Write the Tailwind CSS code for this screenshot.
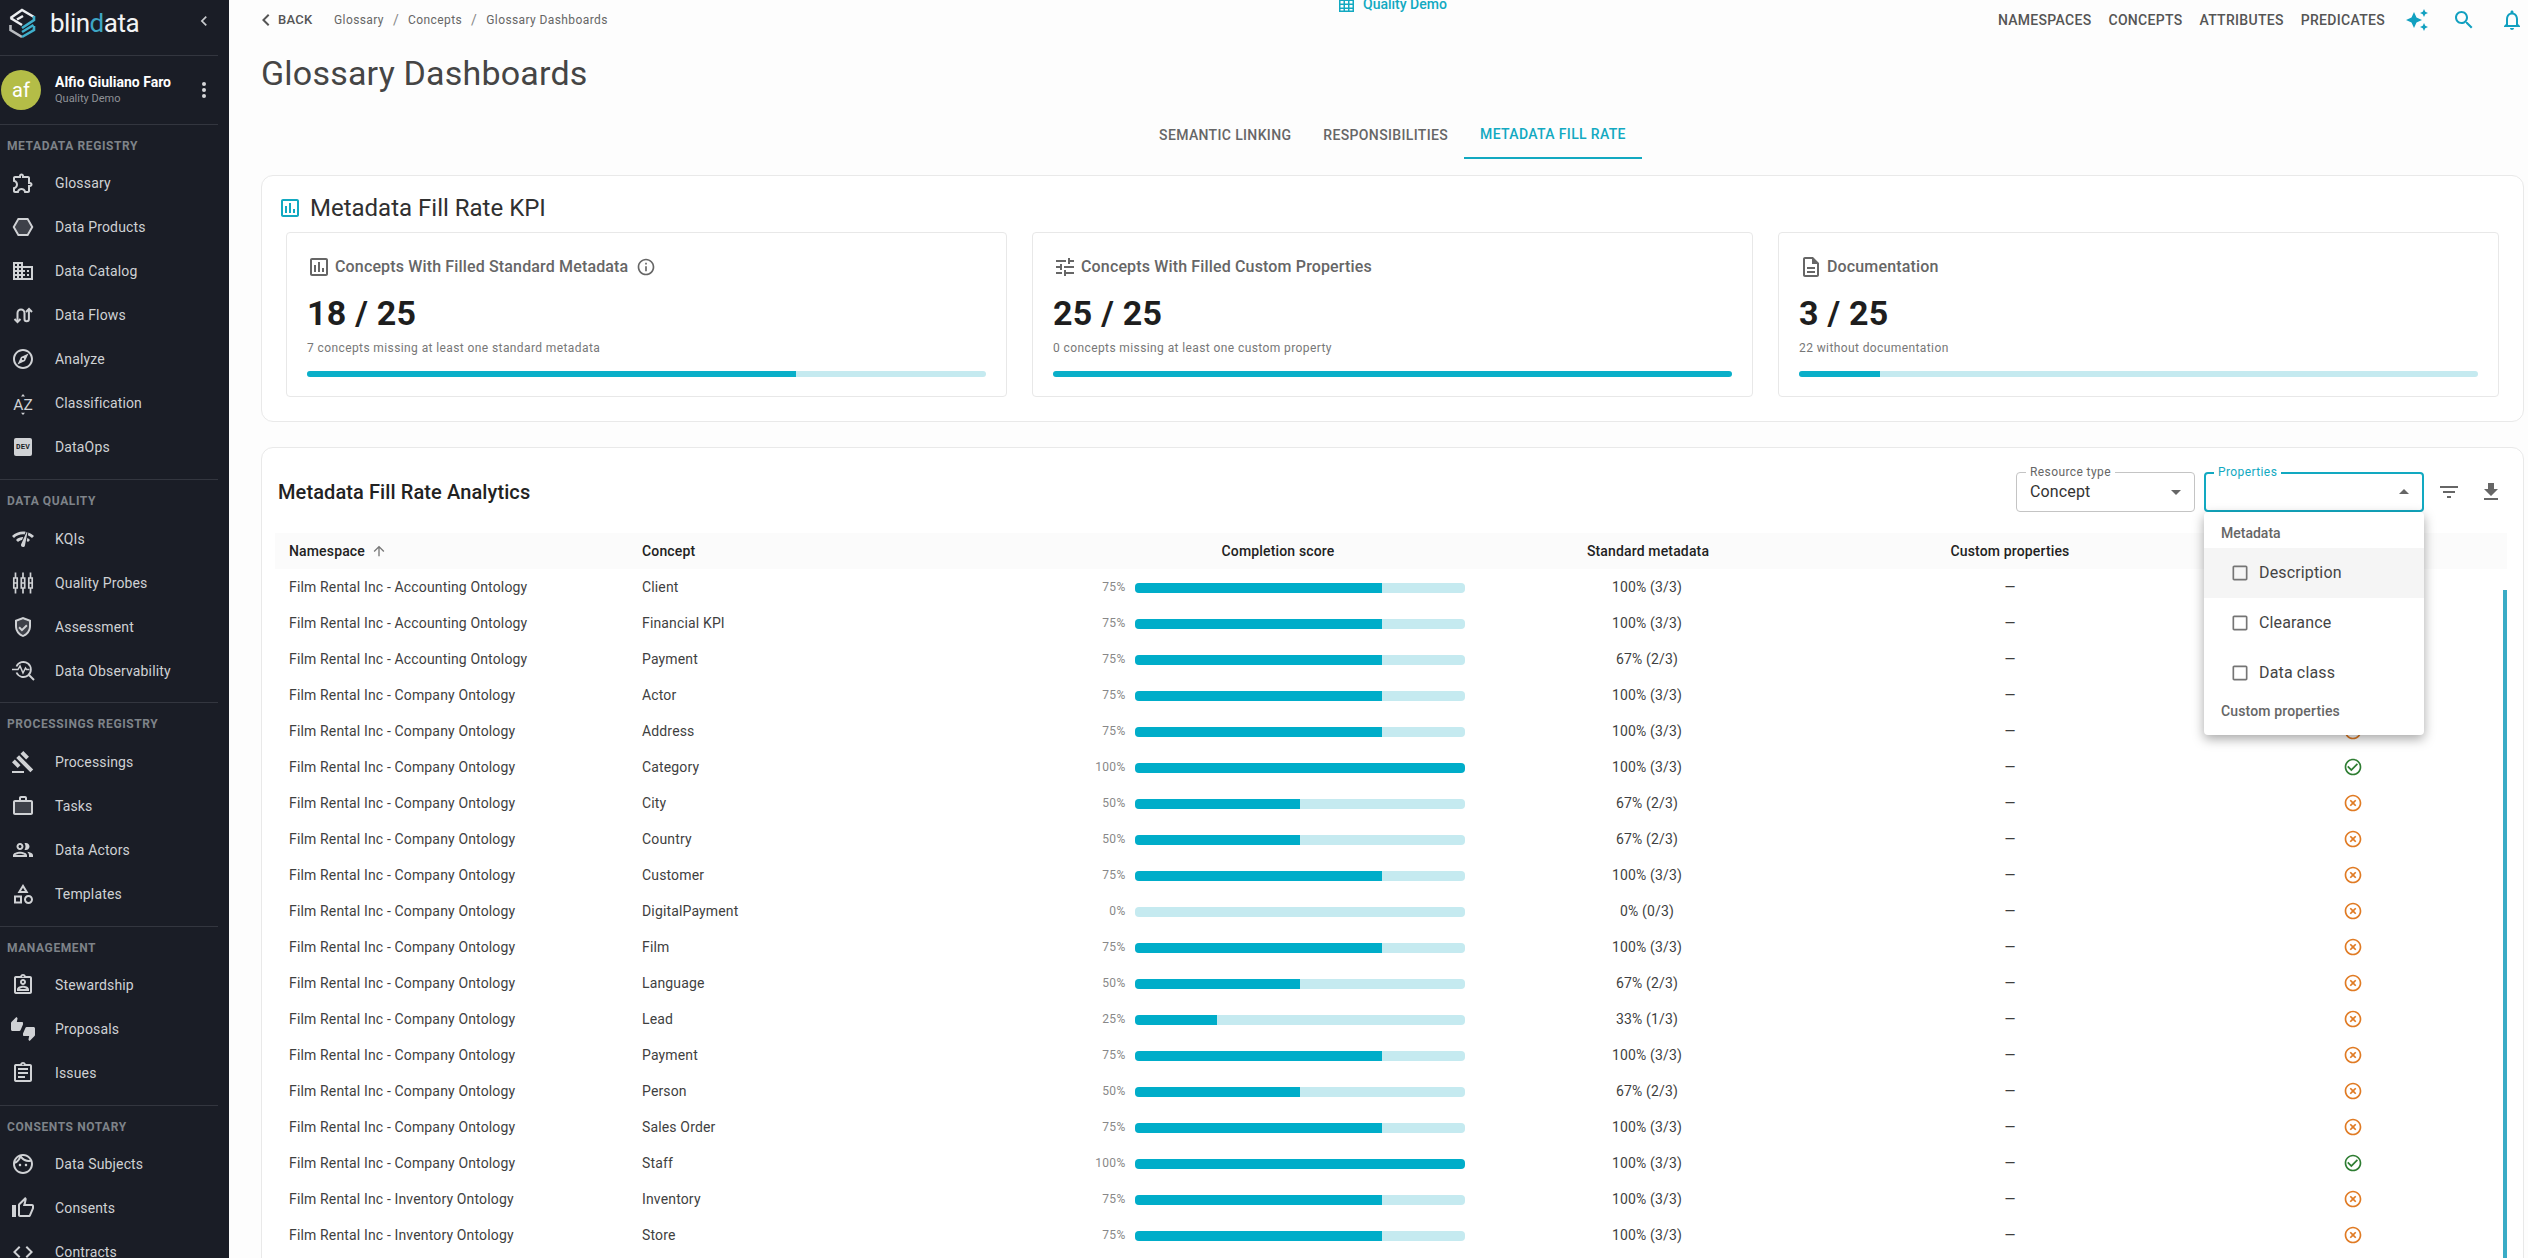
<!DOCTYPE html>
<html>
<head>
<meta charset="utf-8">
<title>Glossary Dashboards</title>
<script src="https://cdn.jsdelivr.net/npm/@tailwindcss/browser@4"></script>
</head>
<body>
<div class="flex h-screen w-screen overflow-hidden [font-family:Roboto,sans-serif] bg-[#fdfdfd]">
  <!-- Sidebar -->
  <aside class="w-[229px] shrink-0 h-screen overflow-hidden bg-[#1a1d26] text-[#cfd1d4]">
    <div class="h-[56px] pb-[10px] flex items-center relative mr-[11px] border-b border-[#33363f]">
      <svg class="w-[30px] h-[34px] ml-[8px] shrink-0" viewBox="8 5 30 34" fill="none" stroke-width="2.6" stroke-linejoin="miter">
        <path d="M10.5 17 L22 9 L34 16" stroke="#eceef0"/>
        <path d="M10.5 17 L22 24" stroke="#eceef0"/>
        <path d="M23 15 L17 18.5" stroke="#eceef0"/>
        <path d="M34 15 V19 L22 27" stroke="#3fb0cc"/>
        <path d="M33.5 24 L22 31" stroke="#3fb0cc"/>
        <path d="M10.5 24 V29 L22 36" stroke="#b9bcc0"/>
        <path d="M22 36 L34 29 V25" stroke="#3fb0cc"/>
      </svg>
      <span class="ml-[12px] text-[26px] leading-none tracking-[-.5px] text-[#f2f3f4] font-normal">blin<span class="text-[#3ea6c4]">d</span>ata</span>
      <svg class="absolute left-[194px] top-[11px] w-5 h-5" viewBox="0 0 24 24" fill="#c9cbce"><path d="M15.41 7.41 14 6l-6 6 6 6 1.41-1.41L10.83 12z"/></svg>
    </div>
    <div class="h-[67.75px] flex items-center">
      <div class="ml-[1px] w-10 h-10 rounded-full bg-[#b4bd47] text-white text-[20px] flex items-center justify-center">af</div>
      <div class="ml-[14px] flex flex-col w-[133px]">
        <span class="text-sm font-bold text-white leading-[18px]">Alfio Giuliano Faro</span>
        <span class="text-[11px] text-[#8f9297] leading-[16px]">Quality Demo</span>
      </div>
      <svg class="w-6 h-6 ml-[4px]" viewBox="0 0 24 24" fill="#d5d6d9"><circle cx="12" cy="6" r="2"/><circle cx="12" cy="12" r="2"/><circle cx="12" cy="18" r="2"/></svg>
    </div>

    <section class="mr-[11px] border-t border-[#33363f] pt-[11px] pb-[10px]">
      <h3 class="h-5 leading-5 pl-[7px] mb-[5.25px] text-xs font-bold tracking-[.6px] text-[#7e8389]">METADATA REGISTRY</h3>
      <a class="h-11 flex items-center pl-[11px] gap-5 text-sm tracking-[.15px]"><svg class="w-6 h-6 shrink-0" viewBox="0 0 24 24" fill="#d0d2d5"><path d="M10.5 4.5c.28 0 .5.22.5.5v2h6v6h2c.28 0 .5.22.5.5s-.22.5-.5.5h-2v6h-2.12c-.68-1.75-2.39-3-4.38-3s-3.7 1.25-4.38 3H4v-2.12c1.75-.68 3-2.39 3-4.38 0-1.99-1.24-3.7-2.99-4.38L4 7h6V5c0-.28.22-.5.5-.5m0-2C9.12 2.5 8 3.62 8 5H4c-1.1 0-1.99.9-1.99 2v3.8h.29c1.49 0 2.7 1.21 2.7 2.7s-1.21 2.7-2.7 2.7H2V20c0 1.1.9 2 2 2h3.8v-.3c0-1.49 1.21-2.7 2.7-2.7s2.7 1.21 2.7 2.7v.3H17c1.1 0 2-.9 2-2v-4c1.38 0 2.5-1.12 2.5-2.5S20.38 11 19 11V7c0-1.1-.9-2-2-2h-4c0-1.38-1.12-2.5-2.5-2.5z"/></svg>Glossary</a>
      <a class="h-11 flex items-center pl-[11px] gap-5 text-sm tracking-[.15px]"><svg class="w-6 h-6 shrink-0" viewBox="0 0 24 24" fill="#d0d2d5"><path d="M17.2 3H6.8l-5.2 9 5.2 9h10.4l5.2-9-5.2-9zm-1.15 16h-8.1l-4.04-7 4.04-7h8.1l4.04 7-4.04 7z"/><path opacity=".2" d="M16.05 5h-8.1l-4.04 7 4.04 7h8.1l4.04-7z"/></svg>Data Products</a>
      <a class="h-11 flex items-center pl-[11px] gap-5 text-sm tracking-[.15px]"><svg class="w-6 h-6 shrink-0" viewBox="0 0 24 24" fill="#d0d2d5"><path d="M12 7V3H2v18h20V7H12zM6 19H4v-2h2v2zm0-4H4v-2h2v2zm0-4H4V9h2v2zm0-4H4V5h2v2zm4 12H8v-2h2v2zm0-4H8v-2h2v2zm0-4H8V9h2v2zm0-4H8V5h2v2zm10 12h-8v-2h2v-2h-2v-2h2v-2h-2V9h8v10zm-2-8h-2v2h2v-2zm0 4h-2v2h2v-2z"/></svg>Data Catalog</a>
      <a class="h-11 flex items-center pl-[11px] gap-5 text-sm tracking-[.15px]"><svg class="w-6 h-6 shrink-0" viewBox="0 0 24 24" fill="none" stroke="#d0d2d5" stroke-width="2"><path d="M6.5 19V10a3.5 3.5 0 0 1 7 0v6a2.2 2.2 0 0 0 4.4 0V6"/><path d="M3.5 16l3 3 3-3M15 9l3-3 3 3"/></svg>Data Flows</a>
      <a class="h-11 flex items-center pl-[11px] gap-5 text-sm tracking-[.15px]"><svg class="w-6 h-6 shrink-0" viewBox="0 0 24 24" fill="#d0d2d5"><path d="M12 2C6.48 2 2 6.48 2 12s4.48 10 10 10 10-4.48 10-10S17.52 2 12 2zm0 18c-4.41 0-8-3.59-8-8s3.59-8 8-8 8 3.59 8 8-3.59 8-8 8zm-5.5-2.5l7.51-3.49L17.5 6.5 9.99 9.99 6.5 17.5zm5.5-6.6c.61 0 1.1.49 1.1 1.1s-.49 1.1-1.1 1.1-1.1-.49-1.1-1.1.49-1.1 1.1-1.1z"/></svg>Analyze</a>
      <a class="h-11 flex items-center pl-[11px] gap-5 text-sm tracking-[.15px]"><svg class="w-6 h-6 shrink-0" viewBox="0 0 24 24" fill="#d0d2d5"><text x="12" y="19" text-anchor="middle" font-family="Roboto" font-size="15.5">AZ</text><path d="M12 3l2 2.5h-4zM12 24l-2-2.2h4z"/></svg>Classification</a>
      <a class="h-11 flex items-center pl-[11px] gap-5 text-sm tracking-[.15px]"><span class="w-6 h-6 shrink-0 flex items-center justify-center"><span class="w-[18px] h-[18px] rounded-[2px] bg-[#d0d2d5] text-[#1a1d26] text-[7.5px] font-bold leading-[18px] text-center [font-family:'Liberation_Mono',monospace]">DEV</span></span>DataOps</a>
    </section>

    <section class="mr-[11px] border-t border-[#33363f] pt-[11px] pb-[9.25px]">
      <h3 class="h-5 leading-5 pl-[7px] mb-[6px] text-xs font-bold tracking-[.6px] text-[#7e8389]">DATA QUALITY</h3>
      <a class="h-11 flex items-center pl-[11px] gap-5 text-sm tracking-[.15px]"><svg class="w-6 h-6 shrink-0" viewBox="0 0 24 24" fill="#d0d2d5"><path d="M15.9 5c-.17 0-.32.09-.41.23l-.07.15-5.18 11.65c-.16.29-.26.61-.26.96 0 1.11.9 2.01 2.01 2.01.96 0 1.77-.68 1.96-1.59l.01-.03L16.4 5.5c0-.28-.22-.5-.5-.5zM1 9l2 2c2.88-2.88 6.79-4.08 10.53-3.62l1.19-2.68C9.89 3.84 4.74 5.27 1 9zm20 2l2-2c-1.64-1.64-3.55-2.82-5.59-3.57l-.53 2.82c1.5.62 2.9 1.53 4.12 2.75zm-4 4l2-2c-.8-.8-1.7-1.42-2.66-1.89l-.55 2.92c.42.27.83.59 1.21.97zM5 13l2 2c1.13-1.13 2.56-1.79 4.03-2l1.28-2.88c-2.63-.08-5.3.87-7.31 2.88z"/></svg>KQIs</a>
      <a class="h-11 flex items-center pl-[11px] gap-5 text-sm tracking-[.15px]"><svg class="w-6 h-6 shrink-0" viewBox="0 0 24 24" fill="none" stroke="#d0d2d5" stroke-width="1.7"><path d="M4.5 1.5v21M12 1.5v21M19.5 1.5v21"/><path d="M2.8 7h3.4v10H2.8zM10.3 7h3.4v10h-3.4zM17.8 7h3.4v10h-3.4z" fill="#1a1d26"/><path d="M3 12h3M10.5 12h3M18 12h3"/></svg>Quality Probes</a>
      <a class="h-11 flex items-center pl-[11px] gap-5 text-sm tracking-[.15px]"><svg class="w-6 h-6 shrink-0" viewBox="0 0 24 24" fill="#d0d2d5"><path opacity=".2" d="M18 11.09c0 4-2.55 7.7-6 8.83-3.45-1.13-6-4.82-6-8.83v-4.7l6-2.25 6 2.25z"/><path d="M12 2 4 5v6.09c0 5.05 3.41 9.76 8 10.91 4.59-1.15 8-5.86 8-10.91V5l-8-3zm6 9.09c0 4-2.55 7.7-6 8.83-3.45-1.13-6-4.82-6-8.83v-4.7l6-2.25 6 2.25v4.7zm-9.18.5L7.4 13l3.54 3.54 5.66-5.66-1.41-1.41-4.25 4.25-2.12-2.13z"/></svg>Assessment</a>
      <a class="h-11 flex items-center pl-[11px] gap-5 text-sm tracking-[.15px]"><svg class="w-6 h-6 shrink-0" viewBox="0 0 24 24" fill="none" stroke="#d0d2d5" stroke-width="1.8"><path d="M5.5 7.5a7.5 7.5 0 1 1 0 6"/><path d="M1 10.5h6l2-3.5 3 7 2.5-5 1 1.5h3" stroke-width="1.5"/><path d="M18 16l5 5" stroke-width="2"/></svg>Data Observability</a>
    </section>

    <section class="mr-[11px] border-t border-[#33363f] pt-[11px] pb-[10px]">
      <h3 class="h-5 leading-5 pl-[7px] mb-[5.25px] text-xs font-bold tracking-[.6px] text-[#7e8389]">PROCESSINGS REGISTRY</h3>
      <a class="h-11 flex items-center pl-[11px] gap-5 text-sm tracking-[.15px]"><svg class="w-6 h-6 shrink-0" viewBox="0 0 24 24" fill="#d0d2d5"><path d="M1 21h12v2H1zM5.245 8.07l2.83-2.827 14.14 14.142-2.828 2.828zM12.317 1l5.657 5.656-2.83 2.83-5.654-5.66zM3.825 9.485l5.657 5.657-2.828 2.828-5.657-5.657z"/></svg>Processings</a>
      <a class="h-11 flex items-center pl-[11px] gap-5 text-sm tracking-[.15px]"><svg class="w-6 h-6 shrink-0" viewBox="0 0 24 24" fill="#d0d2d5"><path opacity=".2" d="M4 8h16v11H4z"/><path d="M14 6V4h-4v2h4zM4 8v11h16V8H4zm16-2c1.11 0 2 .89 2 2v11c0 1.11-.89 2-2 2H4c-1.11 0-2-.89-2-2l.01-11c0-1.11.88-2 1.99-2h4V4c0-1.11.89-2 2-2h4c1.11 0 2 .89 2 2v2h4z"/></svg>Tasks</a>
      <a class="h-11 flex items-center pl-[11px] gap-5 text-sm tracking-[.15px]"><svg class="w-6 h-6 shrink-0" viewBox="0 0 24 24" fill="#d0d2d5"><path d="M9 13.75c-2.34 0-7 1.17-7 3.5V19h14v-1.75c0-2.33-4.66-3.5-7-3.5zM4.34 17c.84-.58 2.87-1.25 4.66-1.25s3.82.67 4.66 1.25H4.34zM9 12c1.93 0 3.5-1.57 3.5-3.5S10.93 5 9 5 5.5 6.57 5.5 8.5 7.07 12 9 12zm0-5c.83 0 1.5.67 1.5 1.5S9.83 10 9 10s-1.5-.67-1.5-1.5S8.17 7 9 7zm7.04 6.81c1.16.84 1.96 1.96 1.96 3.44V19h4v-1.75c0-2.02-3.5-3.17-5.96-3.44zM15 12c1.93 0 3.5-1.57 3.5-3.5S16.93 5 15 5c-.54 0-1.04.13-1.5.35.63.89 1 1.98 1 3.15s-.37 2.26-1 3.15c.46.22.96.35 1.5.35z"/></svg>Data Actors</a>
      <a class="h-11 flex items-center pl-[11px] gap-5 text-sm tracking-[.15px]"><svg class="w-6 h-6 shrink-0" viewBox="0 0 24 24" fill="#d0d2d5"><path d="M12 2l-5.5 9h11L12 2zm0 3.84L13.93 9h-3.87L12 5.84zM17.5 13c-2.49 0-4.5 2.01-4.5 4.5s2.01 4.5 4.5 4.5 4.5-2.01 4.5-4.5-2.01-4.5-4.5-4.5zm0 7c-1.38 0-2.5-1.12-2.5-2.5s1.12-2.5 2.5-2.5 2.5 1.12 2.5 2.5-1.12 2.5-2.5 2.5zM3 21.5h8v-8H3v8zm2-6h4v4H5v-4z"/></svg>Templates</a>
    </section>

    <section class="mr-[11px] border-t border-[#33363f] pt-[11px] pb-[10px]">
      <h3 class="h-5 leading-5 pl-[7px] mb-[5.25px] text-xs font-bold tracking-[.6px] text-[#7e8389]">MANAGEMENT</h3>
      <a class="h-11 flex items-center pl-[11px] gap-5 text-sm tracking-[.15px]"><svg class="w-6 h-6 shrink-0" viewBox="0 0 24 24" fill="#d0d2d5"><path d="M19 3h-4.18C14.4 1.84 13.3 1 12 1s-2.4.84-2.82 2H5c-.14 0-.27.01-.4.04-.39.08-.74.28-1.01.55-.18.18-.33.4-.43.64-.1.23-.16.49-.16.77v14c0 .27.06.54.16.78s.25.45.43.64c.27.27.62.47 1.01.55.13.02.26.03.4.03h14c1.1 0 2-.9 2-2V5c0-1.1-.9-2-2-2zm-7-.25c.41 0 .75.34.75.75s-.34.75-.75.75-.75-.34-.75-.75.34-.75.75-.75zM19 19H5V5h14v14zm-7-7c1.65 0 3-1.35 3-3s-1.35-3-3-3-3 1.35-3 3 1.35 3 3 3zm0-4c.55 0 1 .45 1 1s-.45 1-1 1-1-.45-1-1 .45-1 1-1zm6 8.43c0-2.5-3.97-3.58-6-3.58s-6 1.08-6 3.58V18h12v-1.57zM8.48 16c.74-.51 2.23-1.15 3.52-1.15s2.78.64 3.52 1.15H8.48z"/></svg>Stewardship</a>
      <a class="h-11 flex items-center pl-[11px] gap-5 text-sm tracking-[.15px]"><svg class="w-6 h-6 shrink-0" viewBox="0 0 24 24" fill="#d0d2d5"><path d="M12 6c0-.55-.45-1-1-1H5.82l.66-3.18.02-.23c0-.31-.13-.59-.33-.8L5.38 0 .44 4.94C.17 5.21 0 5.59 0 6v6.5c0 .83.67 1.5 1.5 1.5h6.75c.62 0 1.15-.38 1.38-.91l2.26-5.29c.07-.17.11-.36.11-.55V6zm10.5 4h-6.75c-.62 0-1.15.38-1.38.91l-2.26 5.29c-.07.17-.11.36-.11.55V18c0 .55.45 1 1 1h5.18l-.66 3.18-.02.24c0 .31.13.59.33.8l.79.78 4.94-4.94c.27-.27.44-.65.44-1.06v-6.5c0-.83-.67-1.5-1.5-1.5z"/></svg>Proposals</a>
      <a class="h-11 flex items-center pl-[11px] gap-5 text-sm tracking-[.15px]"><svg class="w-6 h-6 shrink-0" viewBox="0 0 24 24" fill="#d0d2d5"><path d="M7 15h7v2H7zm0-4h10v2H7zm0-4h10v2H7zm12-4h-4.18C14.4 1.84 13.3 1 12 1c-1.3 0-2.4.84-2.82 2H5c-.14 0-.27.01-.4.04-.39.08-.74.28-1.01.55-.18.18-.33.4-.43.64-.1.23-.16.49-.16.77v14c0 .27.06.54.16.78s.25.45.43.64c.27.27.62.47 1.01.55.13.02.26.03.4.03h14c1.1 0 2-.9 2-2V5c0-1.1-.9-2-2-2zm-7-.25c.41 0 .75.34.75.75s-.34.75-.75.75-.75-.34-.75-.75.34-.75.75-.75zM19 19H5V5h14v14z"/></svg>Issues</a>
    </section>

    <section class="mr-[11px] border-t border-[#33363f] pt-[11px] pb-[10px]">
      <h3 class="h-5 leading-5 pl-[7px] mb-[5.25px] text-xs font-bold tracking-[.6px] text-[#7e8389]">CONSENTS NOTARY</h3>
      <a class="h-11 flex items-center pl-[11px] gap-5 text-sm tracking-[.15px]"><svg class="w-6 h-6 shrink-0" viewBox="0 0 24 24" fill="#d0d2d5"><path d="M10.25 13c0 .69-.56 1.25-1.25 1.25S7.75 13.69 7.75 13s.56-1.25 1.25-1.25 1.25.56 1.25 1.25zM15 11.75c-.69 0-1.25.56-1.25 1.25s.56 1.25 1.25 1.25 1.25-.56 1.25-1.25-.56-1.25-1.25-1.25zm7 .25c0 5.52-4.48 10-10 10S2 17.52 2 12 6.48 2 12 2s10 4.48 10 10zM10.66 4.12C12.06 6.44 14.6 8 17.5 8c.46 0 .91-.05 1.34-.12C17.44 5.56 14.9 4 12 4c-.46 0-.91.05-1.34.12zM4.42 9.47c1.71-.97 3.03-2.55 3.66-4.44C6.37 6 5.05 7.58 4.42 9.47zM20 12c0-.78-.12-1.53-.33-2.24-.7.15-1.42.24-2.17.24-3.13 0-5.92-1.44-7.76-3.69C8.69 8.87 6.6 10.88 4 11.86c.01.04 0 .09 0 .14 0 4.41 3.59 8 8 8s8-3.59 8-8z"/></svg>Data Subjects</a>
      <a class="h-11 flex items-center pl-[11px] gap-5 text-sm tracking-[.15px]"><svg class="w-6 h-6 shrink-0" viewBox="0 0 24 24" fill="#d0d2d5"><path d="M9 21h9c.83 0 1.54-.5 1.84-1.22l3.02-7.05c.09-.23.14-.47.14-.73v-2c0-1.1-.9-2-2-2h-6.31l.95-4.57.03-.32c0-.41-.17-.79-.44-1.06L14.17 1 7.58 7.59C7.22 7.95 7 8.45 7 9v10c0 1.1.9 2 2 2zM9 9l4.34-4.34L12 10h9v2l-3 7H9V9zM1 9h4v12H1z"/></svg>Consents</a>
      <a class="h-11 flex items-center pl-[11px] gap-5 text-sm tracking-[.15px]"><svg class="w-6 h-6 shrink-0" viewBox="0 0 24 24" fill="#d0d2d5"><path d="M9.4 16.6L4.8 12l4.6-4.6L8 6l-6 6 6 6 1.4-1.4zm5.2 0l4.6-4.6-4.6-4.6L16 6l6 6-6 6-1.4-1.4z"/></svg>Contracts</a>
    </section>
  </aside>

  <!-- Main -->
  <main class="flex-1 min-w-0 h-screen overflow-hidden pl-8 pr-1 flex flex-col">
    <header class="h-10 shrink-0 flex items-center">
      <div class="w-[1078px] shrink-0 flex items-center">
        <span class="w-[73px] flex items-center gap-[5px] text-[13px] font-medium tracking-[.3px] text-[#555]">
          <svg class="w-3.5 h-4 -ml-[2px]" viewBox="5 4 14 16" fill="#555"><path d="M15.41 7.41 14 6l-6 6 6 6 1.41-1.41L10.83 12z"/></svg>BACK</span>
        <nav class="flex items-center text-xs text-[#666] tracking-[.4px]">
          <span>Glossary</span><span class="mx-[9px] text-sm text-[#888]">/</span><span>Concepts</span><span class="mx-[9px] text-sm text-[#888]">/</span><span>Glossary Dashboards</span>
        </nav>
      </div>
      <div class="self-start mt-[-6px] flex items-center gap-[9px] h-5 text-sm font-medium text-[#12a9c1]">
        <svg class="w-[15px] h-[16px]" viewBox="0 0 15 16" fill="#12a9c1"><path d="M0 1h15v15H0zM1.5 5v2.5h3V5zm4.5 0v2.5h3V5zm4.5 0v2.5h3V5zM1.5 9v2.5h3V9zm4.5 0v2.5h3V9zm4.5 0v2.5h3V9zM1.5 13v1.5h3V13zm4.5 0v1.5h3V13zm4.5 0v1.5h3V13z" fill-rule="evenodd"/></svg>
        Quality Demo
      </div>
      <div class="ml-auto flex items-center text-sm font-medium tracking-[.3px] text-[#555]">
        <span>NAMESPACES</span><span class="ml-[17px]">CONCEPTS</span><span class="ml-[17px]">ATTRIBUTES</span><span class="ml-[17px]">PREDICATES</span>
        <svg class="w-6 h-6 ml-[20px]" viewBox="0 0 24 24" fill="#12a0c0"><path d="M19 9l1.25-2.75L23 5l-2.75-1.25L19 1l-1.25 2.75L15 5l2.75 1.25L19 9zm-7.5.5L9 4 6.5 9.5 1 12l5.5 2.5L9 20l2.5-5.5L17 12l-5.5-2.5zM19 15l-1.25 2.75L15 19l2.75 1.25L19 23l1.25-2.75L23 19l-2.75-1.25L19 15z"/></svg>
        <svg class="w-6 h-6 ml-[23px]" viewBox="0 0 24 24" fill="#12a0c0"><path d="M15.5 14h-.79l-.28-.27C15.41 12.59 16 11.11 16 9.5 16 5.91 13.09 3 9.5 3S3 5.91 3 9.5 5.91 16 9.5 16c1.61 0 3.09-.59 4.23-1.57l.27.28v.79l5 4.99L20.49 19l-4.99-5zm-6 0C7.01 14 5 11.99 5 9.5S7.01 5 9.5 5 14 7.01 14 9.5 11.99 14 9.5 14z"/></svg>
        <svg class="w-6 h-6 ml-[24px]" viewBox="0 0 24 24" fill="#12a0c0"><path d="M12 22c1.1 0 2-.9 2-2h-4c0 1.1.9 2 2 2zm6-6v-5c0-3.07-1.63-5.64-4.5-6.32V4c0-.83-.67-1.5-1.5-1.5s-1.5.67-1.5 1.5v.68C7.64 5.36 6 7.92 6 11v5l-2 2v1h16v-1l-2-2zm-2 1H8v-6c0-2.48 1.51-4.5 4-4.5s4 2.02 4 4.5v6z"/></svg>
      </div>
    </header>

    <h1 class="mt-[13px] h-10 shrink-0 leading-10 text-[34px] font-normal tracking-[.2px] text-[#454545]">Glossary Dashboards</h1>

    <div class="mt-[18px] h-12 shrink-0 flex justify-center text-sm font-medium tracking-[.35px] text-[#666]">
      <span class="px-4 flex items-center">SEMANTIC LINKING</span>
      <span class="px-4 flex items-center">RESPONSIBILITIES</span>
      <span class="px-4 flex items-center text-[#12a9c1] border-b-2 border-[#12a9c1]">METADATA FILL RATE</span>
    </div>

    <!-- KPI card -->
    <section class="mt-4 shrink-0 rounded-xl border border-[#e9e9e9] bg-white pl-4 pr-6 pt-4 pb-6">
      <div class="h-8 flex items-center gap-2 text-2xl text-[#303030]">
        <svg class="w-6 h-6" viewBox="0 0 24 24" fill="#12a9c1"><path d="M19 3H5c-1.1 0-2 .9-2 2v14c0 1.1.9 2 2 2h14c1.1 0 2-.9 2-2V5c0-1.1-.9-2-2-2zm0 16H5V5h14v14zM7 10h2v7H7zm4-3h2v10h-2zm4 6h2v4h-2z"/></svg>
        Metadata Fill Rate KPI
      </div>
      <div class="mt-2 ml-2 grid grid-cols-3 gap-[25px]">
        <div class="rounded border border-[#e8e8e8] bg-white px-5 pt-[22px] pb-[19px]">
          <div class="h-6 flex items-center gap-1 text-base font-medium tracking-[.15px] text-[#666]">
            <svg class="w-6 h-6" viewBox="0 0 24 24" fill="#666"><path d="M19 3H5c-1.1 0-2 .9-2 2v14c0 1.1.9 2 2 2h14c1.1 0 2-.9 2-2V5c0-1.1-.9-2-2-2zm0 16H5V5h14v14zM7 10h2v7H7zm4-3h2v10h-2zm4 6h2v4h-2z"/></svg>
            Concepts With Filled Standard Metadata
            <svg class="w-5 h-5 ml-[4px]" viewBox="0 0 24 24" fill="#666"><path d="M11 7h2v2h-2zm0 4h2v6h-2zm1-9C6.48 2 2 6.48 2 12s4.48 10 10 10 10-4.48 10-10S17.52 2 12 2zm0 18c-4.41 0-8-3.59-8-8s3.59-8 8-8 8 3.59 8 8-3.59 8-8 8z"/></svg>
          </div>
          <div class="mt-[14px] h-10 leading-10 text-[34px] font-bold tracking-[.25px] text-[#1e1e1e]">18 / 25</div>
          <div class="mt-[5px] h-5 leading-5 text-xs tracking-[.4px] text-[#777]">7 concepts missing at least one standard metadata</div>
          <div class="mt-[13px] h-1.5 rounded-[3px] bg-[#c5eaf0] overflow-hidden"><div class="h-full w-[72%] bg-[#0aafc9]"></div></div>
        </div>
        <div class="rounded border border-[#e8e8e8] bg-white px-5 pt-[22px] pb-[19px]">
          <div class="h-6 flex items-center gap-1 text-base font-medium tracking-[.15px] text-[#666]">
            <svg class="w-6 h-6" viewBox="0 0 24 24" fill="#666"><path d="M3 17v2h6v-2H3zM3 5v2h10V5H3zm10 16v-2h8v-2h-8v-2h-2v6h2zM7 9v2H3v2h4v2h2V9H7zm14 4v-2H11v2h10zm-6-4h2V7h4V5h-4V3h-2v6z"/></svg>
            Concepts With Filled Custom Properties
          </div>
          <div class="mt-[14px] h-10 leading-10 text-[34px] font-bold tracking-[.25px] text-[#1e1e1e]">25 / 25</div>
          <div class="mt-[5px] h-5 leading-5 text-xs tracking-[.4px] text-[#777]">0 concepts missing at least one custom property</div>
          <div class="mt-[13px] h-1.5 rounded-[3px] bg-[#c5eaf0] overflow-hidden"><div class="h-full w-full bg-[#0aafc9]"></div></div>
        </div>
        <div class="rounded border border-[#e8e8e8] bg-white px-5 pt-[22px] pb-[19px]">
          <div class="h-6 flex items-center gap-1 text-base font-medium tracking-[.15px] text-[#666]">
            <svg class="w-6 h-6" viewBox="0 0 24 24" fill="#666"><path d="M8 16h8v2H8zm0-4h8v2H8zm6-10H6c-1.1 0-2 .9-2 2v16c0 1.1.89 2 1.99 2H18c1.1 0 2-.9 2-2V8l-6-6zm4 18H6V4h7v5h5v11z"/></svg>
            Documentation
          </div>
          <div class="mt-[14px] h-10 leading-10 text-[34px] font-bold tracking-[.25px] text-[#1e1e1e]">3 / 25</div>
          <div class="mt-[5px] h-5 leading-5 text-xs tracking-[.4px] text-[#777]">22 without documentation</div>
          <div class="mt-[13px] h-1.5 rounded-[3px] bg-[#c5eaf0] overflow-hidden"><div class="h-full w-[12%] bg-[#0aafc9]"></div></div>
        </div>
      </div>
    </section>

    <!-- Analytics card -->
    <section class="mt-[25px] shrink-0 min-h-[900px] rounded-xl border border-[#e9e9e9] bg-white pl-[13px] pr-4 pt-6">
      <div class="h-10 flex items-center ml-[3px] pr-1">
        <h2 class="text-xl font-medium text-[#222] tracking-[.1px]">Metadata Fill Rate Analytics</h2>
        <div class="ml-auto relative w-[179px] h-10 rounded border border-[#c4c4c4] flex items-center pl-[13px]">
          <span class="absolute -top-[8px] left-[9px] px-1 bg-white text-xs leading-[14px] text-[#666] tracking-[.4px]">Resource type</span>
          <span class="text-base text-[#333] tracking-[.15px]">Concept</span>
          <svg class="absolute right-[6px] top-[7px] w-6 h-6" viewBox="0 0 24 24" fill="#666"><path d="M7 10l5 5 5-5z"/></svg>
        </div>
        <div class="ml-[9px] relative w-[220px] h-10 rounded border-2 border-[#12a9c1]">
          <span class="absolute -top-[9px] left-[8px] px-1 bg-white text-xs leading-[14px] text-[#12a9c1] tracking-[.4px]">Properties</span>
          <svg class="absolute right-[6px] top-[6px] w-6 h-6" viewBox="0 0 24 24" fill="#666"><path d="M7 14l5-5 5 5z"/></svg>
          <div class="absolute top-full -left-[2px] -right-[2px] mt-[2px] z-10 rounded bg-white shadow-[0_4px_12px_rgba(0,0,0,.35)]">
            <div class="h-9 pt-[6px] pl-[17px] flex items-center text-sm font-medium text-[#666]">Metadata</div>
            <div class="h-[50px] flex items-center pl-[26px] gap-[9px] bg-[#f5f5f5] text-base text-[#444] tracking-[.15px]"><svg class="w-5 h-5" viewBox="0 0 24 24" fill="#757575"><path d="M19 5v14H5V5h14m0-2H5c-1.1 0-2 .9-2 2v14c0 1.1.9 2 2 2h14c1.1 0 2-.9 2-2V5c0-1.1-.9-2-2-2z"/></svg>Description</div>
            <div class="h-[50px] flex items-center pl-[26px] gap-[9px] text-base text-[#444] tracking-[.15px]"><svg class="w-5 h-5" viewBox="0 0 24 24" fill="#757575"><path d="M19 5v14H5V5h14m0-2H5c-1.1 0-2 .9-2 2v14c0 1.1.9 2 2 2h14c1.1 0 2-.9 2-2V5c0-1.1-.9-2-2-2z"/></svg>Clearance</div>
            <div class="h-[50px] flex items-center pl-[26px] gap-[9px] text-base text-[#444] tracking-[.15px]"><svg class="w-5 h-5" viewBox="0 0 24 24" fill="#757575"><path d="M19 5v14H5V5h14m0-2H5c-1.1 0-2 .9-2 2v14c0 1.1.9 2 2 2h14c1.1 0 2-.9 2-2V5c0-1.1-.9-2-2-2z"/></svg>Data class</div>
            <div class="h-[37px] pb-[11px] pl-[17px] flex items-center text-sm font-medium tracking-[.15px] text-[#666]">Custom properties</div>
          </div>
        </div>
        <svg class="ml-[13px] w-6 h-6" viewBox="0 0 24 24" fill="#666"><path d="M10 18h4v-2h-4v2zM3 6v2h18V6H3zm3 7h12v-2H6v2z"/></svg>
        <svg class="ml-[18px] w-6 h-6" viewBox="0 0 24 24" fill="#666"><path d="M19 9h-4V3H9v6H5l7 7 7-7zM5 18v2h14v-2H5z"/></svg>
      </div>

      <div class="mt-[21px] relative">
        <div class="grid grid-cols-[353px_412px_474px_266px_460px_225px_42px] h-9 items-center bg-[#fbfbfb] text-sm font-medium tracking-[.15px] text-[#222]">
          <span class="pl-[14px] flex items-center gap-[6px]">Namespace<svg class="w-4 h-4" viewBox="0 0 24 24" fill="#777"><path d="M4 12l1.41 1.41L11 7.83V20h2V7.83l5.58 5.59L20 12l-8-8-8 8z"/></svg></span>
          <span class="pl-[14px]">Concept</span>
          <span class="text-center pl-[2px]">Completion score</span>
          <span class="text-center pl-[2px]">Standard metadata</span>
          <span class="text-center">Custom properties</span>
          <span class="text-center">Documentation</span>
          <span></span>
        </div>
        <div id="rows"></div>
        <div class="absolute top-[57px] right-0 -bottom-[400px] w-1 bg-[#3aacc6]"></div>
      </div>
    </section>
  </main>
</div>
<script>
const A = "Film Rental Inc - Accounting Ontology", C = "Film Rental Inc - Company Ontology", I = "Film Rental Inc - Inventory Ontology";
const data = [
 [A,"Client",75,"100% (3/3)"],[A,"Financial KPI",75,"100% (3/3)"],[A,"Payment",75,"67% (2/3)"],
 [C,"Actor",75,"100% (3/3)"],[C,"Address",75,"100% (3/3)"],[C,"Category",100,"100% (3/3)"],
 [C,"City",50,"67% (2/3)"],[C,"Country",50,"67% (2/3)"],[C,"Customer",75,"100% (3/3)"],
 [C,"DigitalPayment",0,"0% (0/3)"],[C,"Film",75,"100% (3/3)"],[C,"Language",50,"67% (2/3)"],
 [C,"Lead",25,"33% (1/3)"],[C,"Payment",75,"100% (3/3)"],[C,"Person",50,"67% (2/3)"],
 [C,"Sales Order",75,"100% (3/3)"],[C,"Staff",100,"100% (3/3)"],[I,"Inventory",75,"100% (3/3)"],[I,"Store",75,"100% (3/3)"]
];
const bad = '<svg class="w-5 h-5 mx-auto" viewBox="0 0 24 24" fill="#e07b24"><path d="M14.59 8L12 10.59 9.41 8 8 9.41 10.59 12 8 14.59 9.41 16 12 13.41 14.59 16 16 14.59 13.41 12 16 9.41 14.59 8zM12 2C6.47 2 2 6.47 2 12s4.47 10 10 10 10-4.47 10-10S17.53 2 12 2zm0 18c-4.41 0-8-3.59-8-8s3.59-8 8-8 8 3.59 8 8-3.59 8-8 8z"/></svg>';
const good = '<svg class="w-5 h-5 mx-auto" viewBox="0 0 24 24" fill="#2e7d32"><path d="M16.59 7.58L10 14.17l-3.59-3.58L5 12l5 5 8-8zM12 2C6.48 2 2 6.48 2 12s4.48 10 10 10 10-4.48 10-10S17.52 2 12 2zm0 18c-4.42 0-8-3.58-8-8s3.58-8 8-8 8 3.58 8 8-3.58 8-8 8z"/></svg>';
document.getElementById("rows").innerHTML = data.map(r => `
  <div class="grid grid-cols-[353px_412px_474px_266px_460px_225px_42px] h-9 items-center text-sm tracking-[.15px] text-[#3f3f3f]">
    <span class="pl-[14px]">${r[0]}</span>
    <span class="pl-[14px]">${r[1]}</span>
    <div class="flex items-center justify-center gap-[9px]">
      <span class="w-9 text-right text-xs tracking-[.3px] text-[#888]">${r[2]}%</span>
      <div class="w-[330px] h-2.5 mt-[2px] rounded-[4px] bg-[#c5eaf0] overflow-hidden"><div class="h-full bg-[#00adc9]" style="width:${r[2]}%"></div></div>
    </div>
    <span class="text-center">${r[3]}</span>
    <span class="text-center">—</span>
    <span>${r[2] === 100 ? good : bad}</span>
    <span></span>
  </div>`).join("");
</script>
</body>
</html>
